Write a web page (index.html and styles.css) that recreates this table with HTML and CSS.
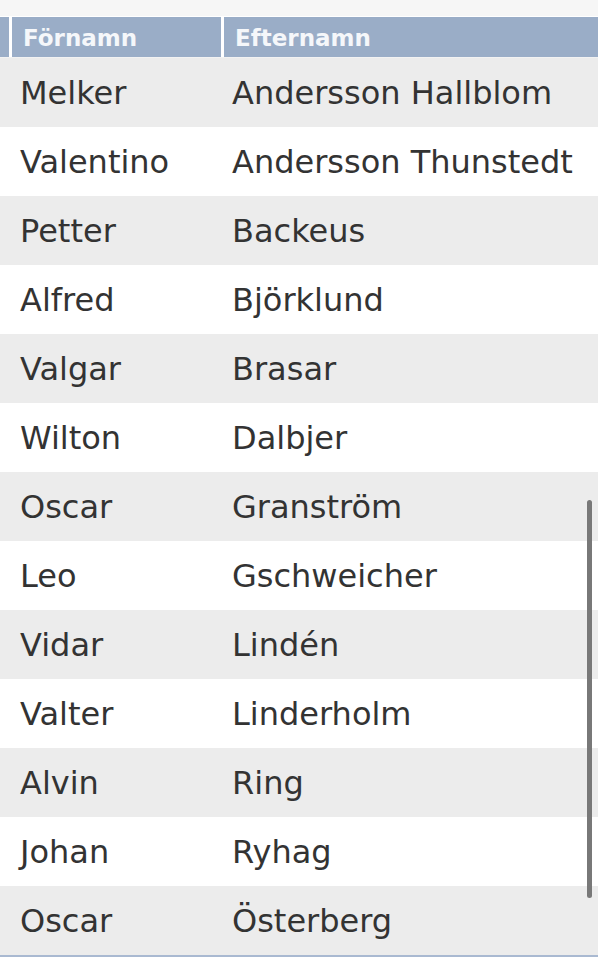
FILE: index.html
```html
<!DOCTYPE html>
<html lang="sv">
<head>
<meta charset="utf-8">
<link rel="stylesheet" href="styles.css">
</head>
<body>
<div class="page">
  <div class="topstrip"></div>
  <div class="table">
    <div class="row head">
      <div class="cell stub"></div>
      <div class="cell">Förnamn</div>
      <div class="cell">Efternamn</div>
    </div>
    <div class="body">
      <div class="row odd"><div class="cell stub"></div><div class="cell">Melker</div><div class="cell">Andersson Hallblom</div></div>
      <div class="row"><div class="cell stub"></div><div class="cell">Valentino</div><div class="cell">Andersson Thunstedt</div></div>
      <div class="row odd"><div class="cell stub"></div><div class="cell">Petter</div><div class="cell">Backeus</div></div>
      <div class="row"><div class="cell stub"></div><div class="cell">Alfred</div><div class="cell">Björklund</div></div>
      <div class="row odd"><div class="cell stub"></div><div class="cell">Valgar</div><div class="cell">Brasar</div></div>
      <div class="row"><div class="cell stub"></div><div class="cell">Wilton</div><div class="cell">Dalbjer</div></div>
      <div class="row odd"><div class="cell stub"></div><div class="cell">Oscar</div><div class="cell">Granström</div></div>
      <div class="row"><div class="cell stub"></div><div class="cell">Leo</div><div class="cell">Gschweicher</div></div>
      <div class="row odd"><div class="cell stub"></div><div class="cell">Vidar</div><div class="cell">Lindén</div></div>
      <div class="row"><div class="cell stub"></div><div class="cell">Valter</div><div class="cell">Linderholm</div></div>
      <div class="row odd"><div class="cell stub"></div><div class="cell">Alvin</div><div class="cell">Ring</div></div>
      <div class="row"><div class="cell stub"></div><div class="cell">Johan</div><div class="cell">Ryhag</div></div>
      <div class="row odd"><div class="cell stub"></div><div class="cell">Oscar</div><div class="cell">Österberg</div></div>
      <div class="scrollbar"></div>
    </div>
  </div>
</div>
</body>
</html>
```

FILE: styles.css
```css
html, body {
  margin: 0;
  padding: 0;
  background: #ffffff;
}
.page {
  width: 598px;
  height: 960px;
  overflow: hidden;
  font-family: "DejaVu Sans", Verdana, sans-serif;
  color: #333333;
}
.topstrip {
  height: 16px;
  background: #f6f6f6;
  border-bottom: 1px solid #ffffff;
}
.row {
  display: grid;
  grid-template-columns: 9px 209px 1fr;
  column-gap: 3px;
}
.head {
  height: 40px;
  background: #ffffff;
  border-bottom: 1px solid #f2f2f2;
}
.head .cell {
  background: #9aadc7;
  color: #f5f7fa;
  font-weight: bold;
  font-size: 23px;
  line-height: 42px;
  padding-left: 11px;
  white-space: nowrap;
  overflow: hidden;
}
.head .stub {
  padding: 0;
}
.body {
  position: relative;
  border-bottom: 2px solid #a9b9d1;
}
.body .row {
  height: 69px;
  align-items: center;
  font-size: 32px;
  background: #ffffff;
}
.body .row.odd {
  background: #ececec;
}
.body .cell {
  padding-left: 8px;
  line-height: 66px;
  white-space: nowrap;
}
.body .stub {
  padding: 0;
}
.scrollbar {
  position: absolute;
  right: 6px;
  top: 442px;
  width: 5px;
  height: 398px;
  border-radius: 3px;
  background: #787878;
}
```
